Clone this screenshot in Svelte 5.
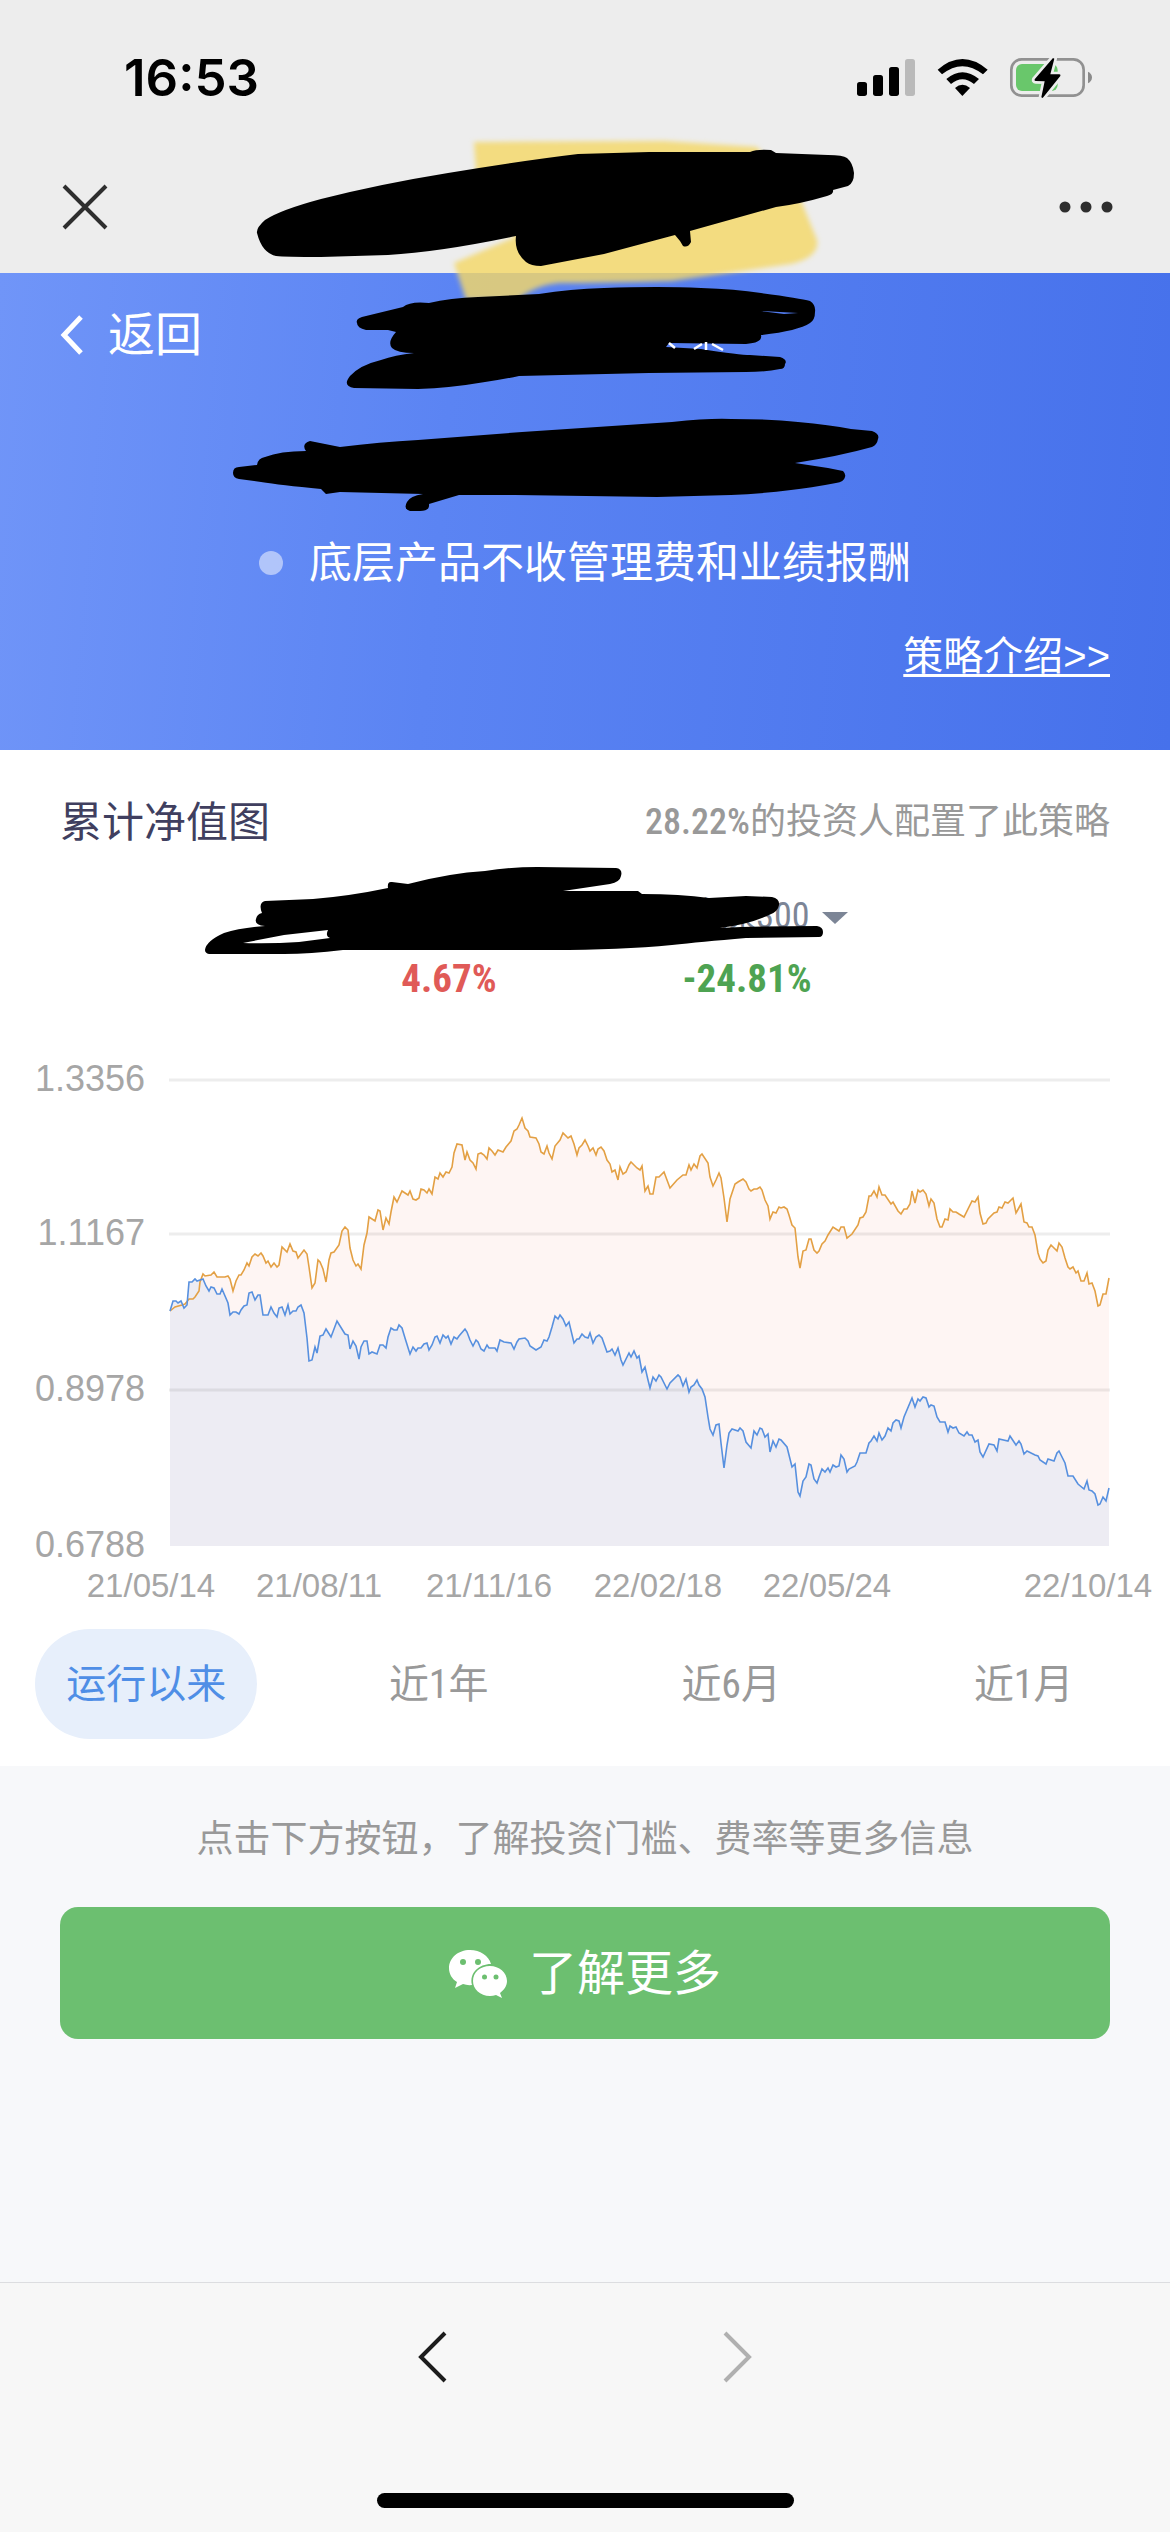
<script lang="ts">
  type Series = { name: string; color: string; fill: string; points: string };

  const ranges = ["运行以来", "近1年", "近6月", "近1月"];
  let active = $state(ranges[0]);

  // Plot area inside the chart's own coordinate system.
  const left = 170;
  const right = 1109;
  const bottom = 1546;

  const yTicks = [
    { label: "1.3356", y: 1080 },
    { label: "1.1167", y: 1234 },
    { label: "0.8978", y: 1390 },
    { label: "0.6788", y: 1546 },
  ];
  const xTicks = [
    { label: "21/05/14", x: 151 },
    { label: "21/08/11", x: 319 },
    { label: "21/11/16", x: 489 },
    { label: "22/02/18", x: 658 },
    { label: "22/05/24", x: 827 },
    { label: "22/10/14", x: 1088 },
  ];

  const series: Series[] = [
    {
      name: "策略",
      color: "#e3a044",
      fill: "#fef5f3",
      points:
        "170,1311 175,1307 182,1305 185,1304 189,1299 193,1299 195,1297 199,1291 200,1282 203,1274 205,1276 211,1275 214,1272 217,1277 225,1277 228,1276 230,1279 233,1291 236,1281 239,1275 241,1275 244,1270 247,1263 249,1266 252,1257 255,1254 258,1256 261,1253 263,1256 266,1263 268,1261 271,1267 274,1263 277,1267 279,1265 282,1247 287,1252 290,1244 293,1251 296,1252 298,1258 304,1250 307,1254 309,1267 312,1288 315,1283 318,1260 320,1262 323,1269 326,1282 329,1260 331,1253 334,1252 339,1245 342,1231 345,1227 348,1230 350,1248 353,1260 356,1266 358,1264 361,1269 364,1245 367,1233 369,1217 375,1221 378,1210 380,1211 383,1230 386,1218 389,1224 391,1212 394,1197 397,1202 402,1191 408,1195 410,1191 413,1199 416,1200 419,1198 421,1189 424,1190 427,1193 429,1189 432,1194 435,1177 438,1179 440,1173 443,1177 446,1172 449,1173 452,1167 454,1153 457,1144 462,1145 465,1160 467,1152 470,1160 473,1163 476,1169 478,1154 481,1153 484,1155 487,1159 489,1148 492,1151 495,1155 498,1150 503,1152 506,1147 511,1141 514,1131 517,1129 519,1125 522,1118 525,1128 528,1131 530,1137 536,1138 539,1144 541,1152 544,1154 547,1146 549,1153 552,1159 555,1146 560,1140 563,1133 568,1138 571,1136 574,1144 577,1155 579,1148 582,1145 585,1140 588,1146 590,1151 593,1148 596,1155 598,1149 601,1147 604,1151 607,1160 610,1164 612,1172 615,1170 618,1180 620,1167 623,1174 626,1172 629,1165 631,1162 637,1168 640,1170 642,1166 645,1191 648,1186 650,1194 653,1194 656,1177 659,1177 664,1172 667,1180 670,1188 677,1180 683,1175 686,1175 689,1165 691,1170 694,1164 697,1168 700,1156 702,1154 708,1163 710,1177 713,1186 716,1180 719,1173 721,1178 724,1198 727,1222 730,1199 735,1184 738,1182 743,1179 746,1182 749,1189 751,1191 754,1189 757,1189 760,1187 762,1190 765,1200 768,1206 770,1219 773,1212 776,1213 779,1207 781,1208 784,1207 787,1209 789,1215 792,1225 795,1228 798,1257 800,1268 803,1251 806,1250 809,1239 811,1239 814,1250 817,1253 819,1251 822,1244 825,1241 828,1235 833,1227 839,1231 841,1227 844,1227 847,1238 852,1234 858,1225 860,1218 863,1217 866,1212 869,1196 871,1196 874,1191 877,1197 879,1187 882,1195 885,1195 891,1204 893,1202 898,1211 901,1214 904,1209 907,1209 910,1204 912,1191 915,1203 918,1190 920,1192 923,1190 926,1194 929,1206 931,1199 934,1203 937,1219 940,1227 942,1227 945,1219 948,1220 950,1209 953,1212 956,1212 959,1214 964,1217 972,1201 975,1202 978,1197 980,1213 983,1224 986,1223 988,1219 994,1213 997,1212 999,1207 1002,1208 1005,1202 1008,1203 1013,1198 1016,1213 1021,1204 1024,1222 1027,1223 1029,1227 1032,1227 1035,1235 1038,1253 1040,1259 1043,1263 1046,1261 1048,1250 1051,1245 1057,1251 1059,1243 1062,1247 1065,1258 1068,1267 1070,1269 1073,1267 1076,1273 1078,1271 1081,1281 1084,1281 1087,1273 1089,1284 1092,1283 1095,1291 1098,1306 1100,1305 1103,1294 1106,1294 1109,1278",
    },
    {
      name: "沪深300",
      color: "#5790df",
      fill: "#edecf3",
      points:
        "170,1311 173,1301 176,1301 178,1303 181,1301 184,1308 187,1305 189,1282 192,1282 195,1279 197,1281 203,1279 206,1286 209,1291 211,1287 214,1288 217,1294 220,1294 222,1289 228,1303 230,1315 233,1312 236,1312 239,1314 241,1310 244,1306 247,1305 249,1293 252,1292 255,1300 258,1295 260,1295 263,1315 268,1315 271,1307 274,1313 277,1317 279,1308 282,1307 285,1315 288,1305 290,1314 293,1311 296,1311 298,1307 301,1305 304,1313 307,1338 309,1361 312,1360 315,1347 317,1353 320,1336 323,1335 326,1329 331,1337 337,1321 345,1334 348,1335 350,1349 353,1341 356,1346 359,1359 361,1347 364,1341 367,1341 369,1354 372,1352 377,1354 380,1345 383,1345 386,1348 388,1337 391,1328 394,1330 397,1330 399,1325 402,1328 405,1338 410,1354 413,1347 416,1351 418,1348 421,1348 424,1344 427,1343 429,1350 432,1345 435,1337 437,1336 440,1343 443,1335 446,1338 448,1336 451,1344 454,1337 457,1339 459,1336 465,1329 467,1332 470,1340 473,1346 476,1340 478,1342 481,1349 484,1351 487,1345 489,1348 495,1348 497,1351 500,1340 504,1342 511,1343 514,1349 517,1342 519,1339 525,1338 528,1341 530,1346 536,1350 541,1347 544,1340 547,1341 549,1337 552,1327 555,1316 558,1319 560,1315 563,1319 566,1326 569,1322 574,1343 577,1339 579,1339 582,1334 585,1337 588,1338 590,1333 593,1343 596,1337 599,1335 602,1338 607,1352 610,1351 612,1349 615,1355 618,1348 621,1360 623,1365 629,1353 631,1357 634,1351 637,1358 639,1356 642,1372 645,1367 648,1380 650,1388 653,1377 656,1381 659,1375 661,1377 667,1389 670,1383 678,1375 680,1377 683,1386 686,1379 689,1392 691,1387 694,1385 697,1380 699,1385 702,1389 705,1397 708,1417 710,1429 713,1435 716,1425 719,1424 721,1443 724,1468 727,1445 729,1433 732,1429 738,1431 740,1428 743,1431 746,1442 751,1448 754,1431 757,1435 760,1428 762,1429 765,1437 768,1434 770,1452 773,1441 776,1447 779,1439 781,1440 787,1447 792,1467 795,1464 798,1492 800,1496 803,1481 806,1477 809,1464 811,1465 814,1479 817,1483 819,1477 822,1469 825,1472 828,1468 830,1472 833,1465 836,1467 839,1466 841,1455 844,1459 847,1472 849,1469 855,1466 857,1462 860,1453 866,1453 869,1443 871,1441 874,1436 877,1441 879,1433 882,1440 885,1436 888,1428 891,1431 893,1423 896,1420 899,1421 901,1428 904,1417 912,1398 915,1407 918,1399 920,1401 923,1397 926,1398 929,1407 931,1405 934,1406 937,1417 940,1422 945,1422 948,1432 950,1426 953,1428 956,1427 959,1433 964,1436 967,1432 969,1435 972,1435 975,1442 978,1440 980,1452 983,1457 989,1444 994,1445 997,1451 999,1439 1008,1441 1010,1436 1016,1445 1019,1441 1021,1444 1024,1454 1027,1451 1035,1455 1038,1456 1040,1460 1046,1464 1048,1459 1054,1461 1057,1453 1059,1451 1065,1463 1068,1476 1073,1476 1078,1484 1084,1489 1087,1481 1089,1490 1092,1491 1095,1494 1098,1505 1100,1504 1103,1497 1106,1501 1109,1488",
    },
  ];
</script>

<div class="page">
  <div class="status">
    <span class="time">16:53</span>
    <svg class="signals" viewBox="48 48 708 130" aria-hidden="true">
      <rect x="48" y="126" width="30" height="42" rx="8" />
      <rect x="96" y="105" width="30" height="63" rx="8" />
      <rect x="144" y="81" width="30" height="87" rx="8" />
      <rect x="192" y="57" width="30" height="111" rx="8" fill="#bababa" />
      <path d="M290 89 Q364 25 440 89 L426 103 Q364 54 303 103 Z" />
      <path d="M316 117 Q364 76 414 117 L399 132 Q364 104 330 132 Z" />
      <path d="M342 144 Q364 124 387 144 L364 168 Z" />
      <rect x="511" y="58" width="217" height="109" rx="31" fill="none" stroke="#919191" stroke-width="8" />
      <rect x="525" y="72" width="125" height="81" rx="18" fill="#69c76b" />
      <path d="M741 95 Q753 101 753 112 Q753 124 741 130 Z" fill="#8a8a8a" />
      <path
        d="M636 54 L581 118 Q579 123 584 123 L611 124 L601 172 L605 174 L658 108 Q660 103 655 103 L628 103 L640 56 Z"
        stroke="#ededed"
        stroke-width="16"
        stroke-linejoin="round"
        paint-order="stroke"
      />
    </svg>
  </div>

  <div class="titlebar">
    <button class="icon" aria-label="关闭">
      <svg width="46" height="46" viewBox="0 0 46 46">
        <path d="M2 2 L44 44 M44 2 L2 44" stroke="#2e2e2e" stroke-width="4" />
      </svg>
    </button>
    <button class="icon" aria-label="更多">
      <svg width="54" height="12" viewBox="0 0 54 12" fill="#2e2e2e">
        <circle cx="6" cy="6" r="5.5" />
        <circle cx="27" cy="6" r="5.5" />
        <circle cx="48" cy="6" r="5.5" />
      </svg>
    </button>
  </div>

  <header class="hero">
    <button class="back">
      <svg width="24" height="40" viewBox="0 0 24 40" fill="none" stroke="#fff" stroke-width="5">
        <path d="M21 2 L4 20 L21 38" />
      </svg>
      返回
    </button>
    <p class="note"><span class="dot"></span>底层产品不收管理费和业绩报酬</p>
    <a class="intro" href="#intro">策略介绍&gt;&gt;</a>
  </header>

  <main class="card">
    <div class="heading">
      <h1>累计净值图</h1>
      <span class="share"><b>28.22%</b>的投资人配置了此策略</span>
    </div>

    <div class="legend">
      <div class="entry">
        <span class="name"></span>
        <strong class="up">4.67%</strong>
      </div>
      <div class="entry">
        <button class="name">沪深300<span class="caret"></span></button>
        <strong class="down">-24.81%</strong>
      </div>
    </div>

    <svg class="chart" viewBox="0 1020 1170 609" role="img" aria-label="累计净值图">
      {#each series as s (s.name)}
        <polygon points={`${left},${bottom} ${s.points} ${right},${bottom}`} fill={s.fill} />
      {/each}
      {#each yTicks as t, i (t.label)}
        {#if i < yTicks.length - 1}
          <line x1={left - 1} x2={right + 1} y1={t.y} y2={t.y} class="grid" />
        {/if}
        <text x="145" y={t.y + 11} class="ylabel">{t.label}</text>
      {/each}
      {#each series as s (s.name)}
        <polyline points={s.points} fill="none" stroke={s.color} stroke-width="1.6" />
      {/each}
      {#each xTicks as t (t.label)}
        <text x={t.x} y="1597" class="xlabel">{t.label}</text>
      {/each}
    </svg>

    <div class="ranges">
      {#each ranges as r (r)}
        <button class:active={active === r} onclick={() => (active = r)}>{r}</button>
      {/each}
    </div>
  </main>

  <section class="more">
    <p>点击下方按钮，了解投资门槛、费率等更多信息</p>
    <button class="cta">
      <svg width="58" height="48" viewBox="0 0 58 48" aria-hidden="true">
        <path
          fill="#fff"
          d="M21 0 C9 0 0 8 0 18 C0 24 3 29 8 32 L6 38 L14 34 Q18 35.500 23 35 C20 23 30 14 42 14 C40 6 31 0 21 0 Z"
        />
        <path
          fill="#fff"
          d="M41 16 C31 16 24 22.500 24 31 C24 39 31 46 41 46 Q44 46 47 45 L53 48 L51 43 C55 40 58 36 58 31 C58 22.500 50 16 41 16 Z"
        />
        <g fill="#6cbf70">
          <circle cx="14" cy="12" r="3" />
          <circle cx="29" cy="12" r="3" />
          <circle cx="35.500" cy="27" r="2.500" />
          <circle cx="47" cy="27" r="2.500" />
        </g>
      </svg>
      了解更多
    </button>
  </section>

  <nav class="toolbar">
    <div class="arrows">
      <button class="icon" aria-label="后退">
        <svg width="30" height="52" viewBox="0 0 30 52" fill="none" stroke="#1c1c1c" stroke-width="4">
          <path d="M27 2 L3 26 L27 50" />
        </svg>
      </button>
      <button class="icon" aria-label="前进" disabled>
        <svg width="30" height="52" viewBox="0 0 30 52" fill="none" stroke="#b0b0b0" stroke-width="4">
          <path d="M3 2 L27 26 L3 50" />
        </svg>
      </button>
    </div>
    <div class="home"></div>
  </nav>

  <!-- Marker strokes laid over the names -->
  <svg class="marks" viewBox="0 0 1170 1000" aria-hidden="true">
    <defs>
      <filter id="soft"><feGaussianBlur stdDeviation="2.5" /></filter>
    </defs>
    <path
      fill="#f4d869"
      fill-opacity=".82"
      filter="url(#soft)"
      d="M474 142 L664 141 L757 147 L802 203 L817 240 Q820 257 791 264 L672 281 Q600 283 560 283 Q535 285 517 300 H466 L454 263 L515 237 L478 200 Z"
    />
    <path
      d="M257 233 Q256 228 265 220 Q280 210 321 199 Q380 184 448 173 Q520 161 578 154 L649 152 L750 152 Q757 149 771 150 L776 153 L828 155 Q843 155 847 158 Q853 163 854 173 Q854 183 848 186 L833 190 Q834 194 827 196 Q800 204 776 207 L690 231 L691 242 Q688 248 683 246 L680 241 L675 235 L604 254 L541 266 Q531 266 526 262 Q514 252 516 236 Q440 252 388 255 L321 257 Q285 257 276 256 Q262 253 257 233 Z"
    />
    <path
      fill-rule="evenodd"
      d="M357 323 Q355 318 366 316 L403 307 Q410 301 429 303 Q450 298 478 297 L539 294 Q570 289 604 288 Q660 286 701 288 Q735 289 761 293 Q800 298 810 301 Q816 305 815 312 Q815 320 810 323 Q798 331 761 335 Q763 343 746 344 L669 343 L666 347 L701 349 Q740 355 750 355 L780 357 Q788 360 785 364 Q785 369 780 369 Q765 372 746 372 L649 373 L519 376 Q500 380 485 382 Q450 388 418 389 L354 388 Q342 386 350 376 Q360 365 381 360 Q395 355 414 353 Q397 353 392 348 Q387 342 396 332 L388 330 L366 330 Q357 328 357 323 Z M761 311 L798 313 L784 314 Z"
    />
    <path d="M669 343 L675 348 M702 344 L694 349 M706 342 V350 M712 344 L723 350" stroke="#fff" stroke-width="2.5" />
    <path
      d="M233 473 Q233 467 239 467 L257 465 Q258 458 265 457 Q280 451 306 451 Q301 444 310 441 L340 447 Q380 442 418 440 L522 432 L672 422 Q710 418 731 419 Q770 419 798 422 Q830 425 851 429 L872 431 Q880 434 878 439 Q877 445 872 447 Q840 456 795 463 L828 468 L843 471 Q846 474 845 477 Q844 482 836 483 Q810 488 791 490 Q760 494 731 495 L657 497 L515 495 L459 495 L429 504 Q430 511 420 511 L410 511 Q403 509 407 502 Q410 496 423 494 L340 492 L326 494 L321 489 Q280 485 261 482 L239 479 Q233 478 233 473 Z"
    />
    <path
      fill-rule="evenodd"
      d="M205 950 Q206 941 224 933 Q240 928 265 926 Q254 925 256 919 Q257 914 262 913 Q258 903 265 901 L313 899 Q350 896 388 888 Q387 881 392 882 L408 884 Q450 873 485 871 Q510 867 537 867 L616 868 Q623 869 621 876 Q620 882 610 884 L563 891 L638 891 L642 894 Q680 894 709 898 L746 896 L772 897 Q780 899 779 905 Q778 912 769 915 Q750 924 720 928 Q760 926 817 926 Q823 927 823 932 Q823 937 819 937 L746 938 Q700 942 672 945 Q620 950 552 950 L343 950 Q310 954 284 954 L209 954 Q205 953 205 950 Z M243 943 L284 935 L328 930 Q325 936 330 938 L299 942 Q270 944 243 943 Z"
    />
  </svg>
</div>

<style>
  :global(body) {
    background: #f7f8fa;
  }

  .page {
    position: relative;
    display: flex;
    flex-direction: column;
    min-height: 100vh;
    background: #f7f8fa;
    font-family: "Roboto Condensed", Roboto, "Noto Sans CJK SC", sans-serif;
    line-height: 1.2;
    color: #999;
  }
  button {
    appearance: none;
    border: none;
    background: none;
    padding: 0;
    margin: 0;
    font: inherit;
    color: inherit;
    cursor: pointer;
  }
  p,
  h1 {
    margin: 0;
    font-weight: 400;
  }
  .icon {
    display: flex;
    align-items: center;
  }

  .status {
    box-sizing: border-box;
    display: flex;
    align-items: center;
    justify-content: space-between;
    height: 140px;
    padding: 16px 77px 0 124px;
    background: #ededed;
    color: #000;
  }
  .time {
    font-family: Inter, sans-serif;
    font-size: 51px;
    font-weight: 600;
  }
  .signals {
    width: 236px;
  }
  .titlebar {
    display: flex;
    align-items: center;
    justify-content: space-between;
    height: 133px;
    padding: 0 57px 0 62px;
    background: #ededed;
  }

  .hero {
    display: flex;
    flex-direction: column;
    padding: 0 60px 43px;
    background: linear-gradient(95deg, #7095f8, #5b84f3 38%, #4671eb);
    color: #fff;
  }
  .back {
    align-self: flex-start;
    display: flex;
    align-items: center;
    gap: 24px;
    height: 124px;
    font-size: 47px;
  }
  .note {
    display: flex;
    align-items: center;
    justify-content: center;
    gap: 26px;
    margin-top: 123px;
    font-size: 43px;
    line-height: 86px;
  }
  .dot {
    width: 24px;
    height: 24px;
    border-radius: 50%;
    background: rgba(255, 255, 255, 0.5);
  }
  .intro {
    align-self: flex-end;
    color: inherit;
    font-family: "Liberation Sans", "Noto Sans CJK SC", sans-serif;
    font-size: 40px;
    line-height: 101px;
    text-decoration-thickness: 3px;
    text-underline-offset: 4px;
  }

  .card {
    padding-bottom: 27px;
    background: #fff;
  }
  .heading {
    display: flex;
    align-items: center;
    justify-content: space-between;
    height: 142px;
    padding: 2px 60px 0;
  }
  h1 {
    font-size: 42px;
    color: #403f5f;
  }
  .share {
    font-size: 36px;
  }
  .share b {
    font-weight: 500;
  }
  .legend {
    display: flex;
    justify-content: center;
    padding-left: 26px;
  }
  .entry {
    display: flex;
    flex-direction: column;
    align-items: center;
    width: 298px;
  }
  .name {
    position: relative;
    height: 44px;
    font-size: 36px;
    line-height: 44px;
    color: #7c8596;
    white-space: nowrap;
  }
  .caret {
    position: absolute;
    left: calc(100% + 12px);
    top: 18px;
    border: 13px solid transparent;
    border-top: 12px solid #7c8596;
    border-bottom: none;
  }
  strong {
    font-size: 39px;
    line-height: 82px;
  }
  .up {
    color: #e05a57;
  }
  .down {
    color: #4ea352;
  }

  .chart {
    display: block;
    width: 100%;
    font-family: "Liberation Sans", sans-serif;
    fill: #a6a6a6;
  }
  .grid {
    stroke: rgba(0, 0, 0, 0.07);
    stroke-width: 3px;
  }
  .ylabel {
    font-size: 36px;
    text-anchor: end;
  }
  .xlabel {
    font-size: 33px;
    text-anchor: middle;
  }

  .ranges {
    display: grid;
    grid-template-columns: repeat(4, 1fr);
  }
  .ranges button {
    justify-self: center;
    height: 110px;
    padding: 2px 31px 0;
    border-radius: 55px;
    font-size: 40px;
  }
  .ranges .active {
    background: #e7effb;
    color: #4f8ee6;
  }

  .more {
    flex: 1;
    padding: 6px 60px 0;
  }
  .more p {
    font-size: 37px;
    line-height: 135px;
    text-align: center;
  }
  .cta {
    display: flex;
    align-items: center;
    justify-content: center;
    gap: 22px;
    width: 100%;
    height: 132px;
    padding-top: 2px;
    border-radius: 18px;
    background: #6cbf70;
    color: #fff;
    font-size: 48px;
  }

  .toolbar {
    border-top: 1px solid #dcdde0;
    background: #f7f7f7;
  }
  .arrows {
    display: flex;
    justify-content: center;
    gap: 274px;
    height: 148px;
  }
  .home {
    width: 417px;
    height: 15px;
    margin: 62px auto 24px;
    border-radius: 8px;
    background: #000;
  }

  .marks {
    position: absolute;
    top: 0;
    left: 0;
    width: 100%;
    pointer-events: none;
  }
</style>
